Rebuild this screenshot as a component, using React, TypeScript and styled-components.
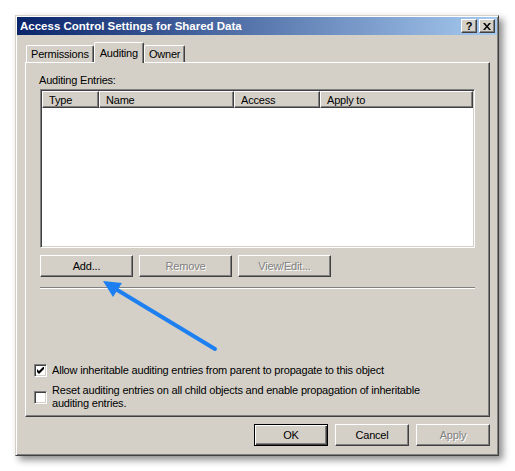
import styled, { createGlobalStyle, css } from "styled-components";

const GlobalStyle = createGlobalStyle`
  html, body { margin: 0; padding: 0; background: #ffffff; }
  body {
    font-family: "Liberation Sans", Arial, sans-serif;
    font-size: 11px;
    letter-spacing: -0.2px;
    color: #000;
  }
`;

const FACE = "#d4d0c8";

const raised = css`
  border: 1px solid;
  border-color: #ffffff #404040 #404040 #ffffff;
  box-shadow: inset -1px -1px #808080, inset 1px 1px ${FACE};
`;

const sunken = css`
  border: 1px solid;
  border-color: #808080 #ffffff #ffffff #808080;
  box-shadow: inset 1px 1px #404040, inset -1px -1px ${FACE};
`;

const Page = styled.div`
  position: relative;
  width: 515px;
  height: 471px;
  padding: 15px 0 0 15px;
  box-sizing: border-box;
`;

const Window = styled.div`
  width: 484px;
  height: 441px;
  box-sizing: border-box;
  background: ${FACE};
  border: 1px solid;
  border-color: ${FACE} #404040 #404040 ${FACE};
  box-shadow: inset 1px 1px #ffffff, inset -1px -1px #808080, 4px 4px 7px rgba(0, 0, 0, 0.45);
  padding: 1px;
  display: flex;
  flex-direction: column;
`;

const TitleBar = styled.div`
  height: 18px;
  display: flex;
  align-items: center;
  padding: 0 2px 0 3px;
  background: linear-gradient(to right, #0a246a, #a6caf0);
`;

const Title = styled.div`
  flex: 1;
  color: #ffffff;
  font-weight: bold;
  font-size: 11.5px;
  letter-spacing: 0;
`;

const CaptionButton = styled.div`
  ${raised};
  width: 16px;
  height: 14px;
  box-sizing: border-box;
  background: ${FACE};
  display: flex;
  align-items: center;
  justify-content: center;
  margin-left: 2px;
  font-weight: bold;
  font-size: 11px;
`;

const Body = styled.div`
  flex: 1;
  display: flex;
  flex-direction: column;
  padding: 8px 7px 8px 8px;
`;

const TabStrip = styled.div`
  height: 19px;
  display: flex;
  align-items: flex-end;
  padding-left: 1px;
`;

const Tab = styled.div<{ $active?: boolean }>`
  position: relative;
  box-sizing: border-box;
  height: ${(p) => (p.$active ? 21 : 17)}px;
  margin-bottom: ${(p) => (p.$active ? -1 : 0)}px;
  padding: 0 ${(p) => (p.$active ? 5 : 4)}px;
  display: flex;
  align-items: center;
  background: ${FACE};
  border-top: 1px solid #ffffff;
  border-left: 1px solid #ffffff;
  border-right: 1px solid #404040;
  box-shadow: inset -1px 0 #808080;
  border-radius: 2px 2px 0 0;
  z-index: ${(p) => (p.$active ? 1 : 0)};
`;

const Panel = styled.div`
  height: 355px;
  box-sizing: border-box;
  border: 1px solid;
  border-color: #ffffff #404040 #404040 #ffffff;
  box-shadow: inset -1px -1px #808080;
  display: flex;
  flex-direction: column;
  padding: 11px 14px 6px 14px;
`;

const Label = styled.div`
  line-height: 13px;
  margin-left: -1px;
`;

const ListView = styled.div`
  ${sunken};
  margin-top: 2px;
  height: 159px;
  box-sizing: border-box;
  background: #ffffff;
  padding: 1px;
`;

const HeaderRow = styled.div`
  display: flex;
  height: 17px;
`;

const HeaderCell = styled.div<{ $w?: number }>`
  ${raised};
  box-sizing: border-box;
  background: ${FACE};
  ${(p) => (p.$w ? `width: ${p.$w}px;` : "flex: 1;")}
  padding-left: 6px;
  display: flex;
  align-items: center;
`;

const ButtonRow = styled.div`
  display: flex;
  gap: 6px;
  margin-top: 7px;
`;

const Button = styled.div<{ $disabled?: boolean; $default?: boolean }>`
  ${raised};
  width: 93px;
  height: 22px;
  box-sizing: border-box;
  background: ${FACE};
  display: flex;
  align-items: center;
  justify-content: center;
  color: ${(p) => (p.$disabled ? "#808080" : "#000")};
  text-shadow: ${(p) => (p.$disabled ? "1px 1px #ffffff" : "none")};
  ${(p) =>
    p.$default &&
    css`
      border: 1px solid #000;
      box-shadow: inset 1px 1px #ffffff, inset -1px -1px #404040, inset -2px -2px #808080;
    `}
`;

const Separator = styled.div`
  margin-top: 10px;
  height: 0;
  border-top: 1px solid #808080;
  border-bottom: 1px solid #ffffff;
`;

const Checks = styled.div`
  margin-top: auto;
  margin-left: -6px;
  display: flex;
  flex-direction: column;
  gap: 7px;
`;

const CheckRow = styled.div`
  display: flex;
  align-items: center;
  gap: 5px;
`;

const Box = styled.div`
  ${sunken};
  width: 13px;
  height: 13px;
  flex: none;
  box-sizing: border-box;
  background: #ffffff;
  display: flex;
  align-items: center;
  justify-content: center;
`;

const CheckText = styled.div`
  width: 400px;
  line-height: 13px;
`;

const Footer = styled.div`
  display: flex;
  justify-content: flex-end;
  gap: 7px;
  margin-top: 7px;
`;

const DialogButton = styled(Button)`
  width: 74px;
`;

const Overlay = styled.svg`
  position: absolute;
  left: 0;
  top: 0;
  pointer-events: none;
`;

const Checkbox = ({ checked }: { checked?: boolean }) => (
  <Box>
    {checked && (
      <svg width="7" height="7" viewBox="0 0 7 7">
        <path d="M0 2v3l2 2l5-5v-3l-5 5z" fill="#000" />
      </svg>
    )}
  </Box>
);

export default function App() {
  return (
    <Page>
      <GlobalStyle />
      <Window>
        <TitleBar>
          <Title>Access Control Settings for Shared Data</Title>
          <CaptionButton>?</CaptionButton>
          <CaptionButton>
            <svg width="8" height="7" viewBox="0 0 8 7">
              <path d="M0 0h2l2 2.5l2-2.5h2l-3 3.5l3 3.5h-2l-2-2.5l-2 2.5h-2l3-3.5z" fill="#000" />
            </svg>
          </CaptionButton>
        </TitleBar>
        <Body>
          <TabStrip>
            <Tab>Permissions</Tab>
            <Tab $active>Auditing</Tab>
            <Tab>Owner</Tab>
          </TabStrip>
          <Panel>
            <Label>Auditing Entries:</Label>
            <ListView>
              <HeaderRow>
                <HeaderCell $w={57}>Type</HeaderCell>
                <HeaderCell $w={135}>Name</HeaderCell>
                <HeaderCell $w={86}>Access</HeaderCell>
                <HeaderCell>Apply to</HeaderCell>
              </HeaderRow>
            </ListView>
            <ButtonRow>
              <Button>Add...</Button>
              <Button $disabled>Remove</Button>
              <Button $disabled>View/Edit...</Button>
            </ButtonRow>
            <Separator />
            <Checks>
              <CheckRow>
                <Checkbox checked />
                <CheckText>Allow inheritable auditing entries from parent to propagate to this object</CheckText>
              </CheckRow>
              <CheckRow>
                <Checkbox />
                <CheckText>
                  Reset auditing entries on all child objects and enable propagation of inheritable auditing entries.
                </CheckText>
              </CheckRow>
            </Checks>
          </Panel>
          <Footer>
            <DialogButton $default>OK</DialogButton>
            <DialogButton>Cancel</DialogButton>
            <DialogButton $disabled>Apply</DialogButton>
          </Footer>
        </Body>
      </Window>
      <Overlay width="515" height="471" viewBox="0 0 515 471">
        <line x1="215" y1="349" x2="114" y2="288" stroke="#1e80f0" strokeWidth="4" strokeLinecap="round" />
        <path d="M103 281L122 283L113 297Z" fill="#1e80f0" />
      </Overlay>
    </Page>
  );
}
